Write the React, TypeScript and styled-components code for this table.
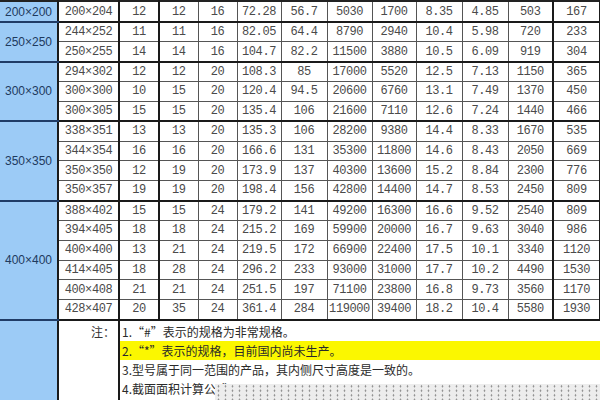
import styled, { createGlobalStyle } from 'styled-components';

interface ISpecRow {
   size: string;
   values: string[];
}

interface IGroup {
   label: string;
   rows: ISpecRow[];
}

const GROUPS: IGroup[] = [
   {
      label: '200×200',
      rows: [{ size: '200×204', values: ['12', '12', '16', '72.28', '56.7', '5030', '1700', '8.35', '4.85', '503', '167'] }],
   },
   {
      label: '250×250',
      rows: [
         { size: '244×252', values: ['11', '11', '16', '82.05', '64.4', '8790', '2940', '10.4', '5.98', '720', '233'] },
         { size: '250×255', values: ['14', '14', '16', '104.7', '82.2', '11500', '3880', '10.5', '6.09', '919', '304'] },
      ],
   },
   {
      label: '300×300',
      rows: [
         { size: '294×302', values: ['12', '12', '20', '108.3', '85', '17000', '5520', '12.5', '7.13', '1150', '365'] },
         { size: '300×300', values: ['10', '15', '20', '120.4', '94.5', '20600', '6760', '13.1', '7.49', '1370', '450'] },
         { size: '300×305', values: ['15', '15', '20', '135.4', '106', '21600', '7110', '12.6', '7.24', '1440', '466'] },
      ],
   },
   {
      label: '350×350',
      rows: [
         { size: '338×351', values: ['13', '13', '20', '135.3', '106', '28200', '9380', '14.4', '8.33', '1670', '535'] },
         { size: '344×354', values: ['16', '16', '20', '166.6', '131', '35300', '11800', '14.6', '8.43', '2050', '669'] },
         { size: '350×350', values: ['12', '19', '20', '173.9', '137', '40300', '13600', '15.2', '8.84', '2300', '776'] },
         { size: '350×357', values: ['19', '19', '20', '198.4', '156', '42800', '14400', '14.7', '8.53', '2450', '809'] },
      ],
   },
   {
      label: '400×400',
      rows: [
         { size: '388×402', values: ['15', '15', '24', '179.2', '141', '49200', '16300', '16.6', '9.52', '2540', '809'] },
         { size: '394×405', values: ['18', '18', '24', '215.2', '169', '59900', '20000', '16.7', '9.63', '3040', '986'] },
         { size: '400×400', values: ['13', '21', '24', '219.5', '172', '66900', '22400', '17.5', '10.1', '3340', '1120'] },
         { size: '414×405', values: ['18', '28', '24', '296.2', '233', '93000', '31000', '17.7', '10.2', '4490', '1530'] },
         { size: '400×408', values: ['21', '21', '24', '251.5', '197', '71100', '23800', '16.8', '9.73', '3560', '1170'] },
         { size: '428×407', values: ['20', '35', '24', '361.4', '284', '119000', '39400', '18.2', '10.4', '5580', '1930'] },
      ],
   },
];

const COL_WIDTHS = [58, 61, 40, 39, 39, 44, 46, 45, 44, 46, 46, 45, 47];
// value columns (after size) whose right edge is a heavy rule
const THICK_AFTER = [0, 9, 10];

const NOTES = [
   '1.“#”表示的规格为非常规格。',
   '2.“*”表示的规格，目前国内尚未生产。',
   '3.型号属于同一范围的产品，其内侧尺寸高度是一致的。',
   '4.截面面积计算公式：',
];

const GlobalStyle = createGlobalStyle`
   html, body {
      margin: 0;
      padding: 0;
      background: #ffffff;
      overflow: hidden;
   }
`;

const Sheet = styled.table`
   width: 600px;
   table-layout: fixed;
   border-collapse: collapse;
   border-top: 2px solid #222;
`;

const Col = styled.col<{ $w: number }>`
   width: ${({ $w }) => $w}px;
`;

const Row = styled.tr<{ $h: number }>`
   height: ${({ $h }) => $h}px;
`;

const GroupCell = styled.td`
   background: #9ccbf6;
   color: #1e3a5e;
   font-family: 'Liberation Sans', Arial, sans-serif;
   font-size: 12px;
   text-align: center;
   vertical-align: middle;
   white-space: nowrap;
   padding: 0;
   border-bottom: 2px solid #203c66;
   border-right: 2px solid #1a1a1a;
`;

const SizeCell = styled.td<{ $thickBottom: boolean }>`
   font-family: 'Liberation Mono', monospace;
   font-size: 12px;
   letter-spacing: -0.4px;
   color: #4a4a4a;
   text-align: center;
   padding: 0;
   line-height: 1;
   border-right: 2px solid #1a1a1a;
   border-bottom: ${({ $thickBottom }) => ($thickBottom ? '2px solid #1a1a1a' : '1px solid #555')};
`;

const Cell = styled.td<{ $thickRight: boolean; $thickBottom: boolean }>`
   font-family: 'Liberation Mono', monospace;
   font-size: 12px;
   letter-spacing: -0.4px;
   color: #4a4a4a;
   text-align: center;
   padding: 0;
   line-height: 1;
   white-space: nowrap;
   border-right: ${({ $thickRight }) => ($thickRight ? '2px solid #1a1a1a' : '1px solid #555')};
   border-bottom: ${({ $thickBottom }) => ($thickBottom ? '2px solid #1a1a1a' : '1px solid #555')};
`;

const NoteBlue = styled.td`
   background: #9ccbf6;
   padding: 0;
   border-right: 2px solid #1a1a1a;
`;

const NoteLabel = styled.td`
   font-family: 'Noto Sans CJK SC', sans-serif;
   font-size: 12px;
   color: #333;
   text-align: right;
   vertical-align: top;
   padding: 1px 3px 0 0;
   line-height: 19px;
   border-right: 2px solid #1a1a1a;
`;

const NoteCell = styled.td`
   padding: 0;
   vertical-align: top;
`;

const NoteBody = styled.div`
   position: relative;
   height: 80px;
   padding-top: 1px;
   box-sizing: border-box;
   overflow: hidden;
`;

const NoteLine = styled.div<{ $marked?: boolean }>`
   height: 19px;
   line-height: 19px;
   padding-left: 2px;
   font-family: 'Noto Sans CJK SC', sans-serif;
   font-size: 12px;
   color: #2a2a2a;
   white-space: nowrap;
   background: ${({ $marked }) => ($marked ? '#fbf700' : 'transparent')};
`;

const DotOverlay = styled.div`
   position: absolute;
   left: 95px;
   right: 0;
   bottom: 0;
   height: 17px;
   background-color: #ededed;
   background-image: radial-gradient(circle, #8a8a8a 0.8px, transparent 1.1px);
   background-size: 7px 4.5px;
`;

const App = () => {
   let rowIndex = 0;
   return (
      <>
         <GlobalStyle />
         <Sheet>
            <colgroup>
               {COL_WIDTHS.map((w, i) => (
                  <Col key={i} $w={w} />
               ))}
            </colgroup>
            <tbody>
               {GROUPS.map((group) =>
                  group.rows.map((row, i) => {
                     const isLast = i === group.rows.length - 1;
                     const h = rowIndex === 0 ? 21 : 19.85;
                     rowIndex += 1;
                     return (
                        <Row key={row.size + rowIndex} $h={h}>
                           {i === 0 && <GroupCell rowSpan={group.rows.length}>{group.label}</GroupCell>}
                           <SizeCell $thickBottom={isLast}>{row.size}</SizeCell>
                           {row.values.map((v, j) => (
                              <Cell key={j} $thickRight={THICK_AFTER.includes(j)} $thickBottom={isLast}>
                                 {v}
                              </Cell>
                           ))}
                        </Row>
                     );
                  })
               )}
               <Row $h={80}>
                  <NoteBlue />
                  <NoteLabel>注：</NoteLabel>
                  <NoteCell colSpan={11}>
                     <NoteBody>
                        {NOTES.map((note, i) => (
                           <NoteLine key={i} $marked={i === 1}>
                              {note}
                           </NoteLine>
                        ))}
                        <DotOverlay />
                     </NoteBody>
                  </NoteCell>
               </Row>
            </tbody>
         </Sheet>
      </>
   );
};

export default App;
